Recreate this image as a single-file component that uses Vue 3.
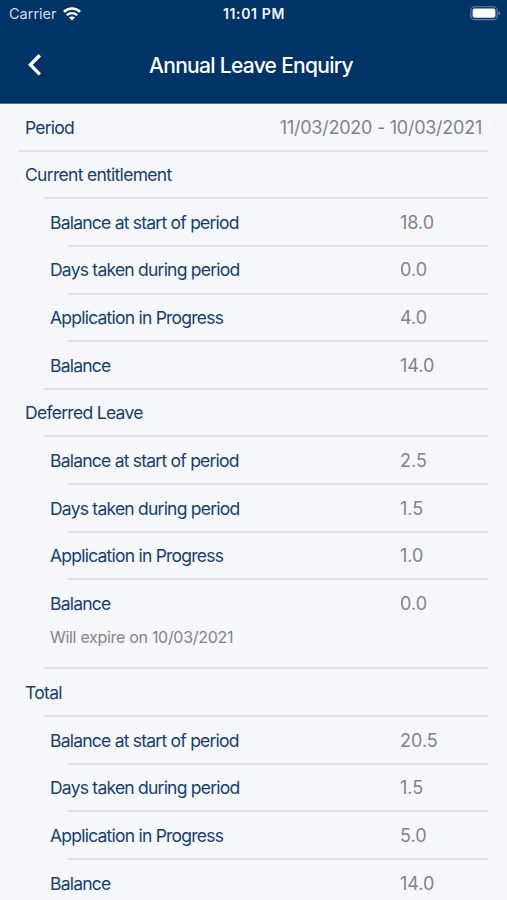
<script setup>
const sections = [
  {
    title: 'Current entitlement',
    rows: [
      { label: 'Balance at start of period', value: '18.0' },
      { label: 'Days taken during period', value: '0.0' },
      { label: 'Application in Progress', value: '4.0' },
      { label: 'Balance', value: '14.0' },
    ],
  },
  {
    title: 'Deferred Leave',
    rows: [
      { label: 'Balance at start of period', value: '2.5' },
      { label: 'Days taken during period', value: '1.5' },
      { label: 'Application in Progress', value: '1.0' },
      { label: 'Balance', value: '0.0', note: 'Will expire on 10/03/2021' },
    ],
  },
  {
    title: 'Total',
    rows: [
      { label: 'Balance at start of period', value: '20.5' },
      { label: 'Days taken during period', value: '1.5' },
      { label: 'Application in Progress', value: '5.0' },
      { label: 'Balance', value: '14.0' },
    ],
  },
]
</script>

<template>
  <div class="screen">
    <header class="header">
      <div class="status">
        <div class="carrier">
          <span class="carrier-name">Carrier</span>
          <svg class="wifi" viewBox="0 0 18 14" width="18" height="14">
            <path d="M.9 4.9C5.5.5 12.5.5 17.1 4.9" fill="none" stroke="#fff" stroke-width="2.5" />
            <path d="M3.8 8.1C6.7 5.4 11.3 5.4 14.2 8.1" fill="none" stroke="#fff" stroke-width="2.3" />
            <path d="M9 13.6L5.9 10.6C7.6 9 10.4 9 12.1 10.6Z" fill="#fff" />
          </svg>
        </div>
        <span class="time">11:01 PM</span>
        <svg class="battery" viewBox="0 0 31 15" width="31" height="15">
          <rect x=".8" y=".8" width="26.4" height="12.8" rx="3.8" fill="none" stroke="#6583a3" stroke-width="1.1" />
          <rect x="2.6" y="2.6" width="22.8" height="9.2" rx="2" fill="#fff" />
          <path d="M28.5 5.2Q30.2 5.8 30.2 7.2T28.5 9.2Z" fill="#6583a3" />
        </svg>
      </div>
      <div class="nav">
        <svg class="back" viewBox="0 0 14 24" width="14" height="24">
          <path d="M11.8 2.2L2.4 11.8L11.8 21.4" fill="none" stroke="#fff" stroke-width="3.4" />
        </svg>
        <h1 class="title">Annual Leave Enquiry</h1>
      </div>
    </header>

    <main class="content">
      <div class="period">
        <span>Period</span>
        <span class="dates">11/03/2020 - 10/03/2021</span>
      </div>
      <section v-for="section in sections" :key="section.title" class="section">
        <h2 class="heading">{{ section.title }}</h2>
        <div class="items">
          <div v-for="row in section.rows" :key="row.label" class="item">
            <div class="row">
              <span>{{ row.label }}</span>
              <span class="value">{{ row.value }}</span>
            </div>
            <p v-if="row.note" class="note">{{ row.note }}</p>
            <div class="divider"></div>
          </div>
        </div>
      </section>
    </main>
  </div>
</template>

<style>
body {
  margin: 0;
  background: #f5f7fa;
}
</style>

<style scoped>
.screen {
  height: 900px;
  overflow: hidden;
  background: #f5f7fa;
  color: #163e70;
  font-family: Inter, "Liberation Sans", sans-serif;
  font-size: 17.5px;
  letter-spacing: -0.77px;
}
.header {
  box-sizing: border-box;
  height: 104px;
  background: #003366;
  color: #fff;
  border-bottom: 1px solid #4a6f94;
}
.status {
  height: 27px;
  display: grid;
  grid-template-columns: 1fr auto 1fr;
  align-items: center;
  padding: 0 6px 0 9px;
}
.carrier {
  display: flex;
  align-items: center;
  gap: 6px;
}
.carrier-name {
  font-size: 14.5px;
  letter-spacing: 0;
  color: #d3dce6;
}
.time {
  margin-right: 2px;
  font-size: 14px;
  font-weight: 600;
  letter-spacing: 0.65px;
  color: #f2f5f8;
}
.battery {
  justify-self: end;
}
.nav {
  height: 76px;
  display: grid;
  grid-template-columns: 42px 1fr 47px;
  align-items: center;
}
.back {
  justify-self: end;
}
.title {
  margin: 0;
  text-align: center;
  font-size: 21px;
  font-weight: 500;
  letter-spacing: -0.7px;
}
.content {
  padding: 0 19px;
}
.period,
.heading,
.row {
  box-sizing: border-box;
  display: flex;
  align-items: center;
}
.period {
  height: 47.6px;
  justify-content: space-between;
  padding: 1px 6px 0;
  border-bottom: 2px solid #e0e2e5;
}
.dates {
  color: #838488;
  font-size: 18px;
  letter-spacing: -0.25px;
}
.heading {
  margin: 0 0 0 25px;
  height: 47.65px;
  padding-top: 0.5px;
  text-indent: -19px;
  font-size: 17.5px;
  font-weight: 400;
  letter-spacing: -0.7px;
  border-bottom: 2px solid #e0e2e5;
}
.items {
  margin-left: 25px;
}
.row {
  height: 45.65px;
  display: grid;
  grid-template-columns: 350px 1fr;
  padding: 0.5px 0 0 6px;
}
.value {
  color: #838488;
  font-size: 18px;
  letter-spacing: 0;
}
.divider {
  height: 2px;
  margin-left: 24px;
  background: #e0e2e5;
}
.item:last-child .divider {
  margin-left: 0;
}
.note {
  margin: 0 0 0 6px;
  height: 41.4px;
  line-height: 22px;
  font-size: 16px;
  letter-spacing: -0.3px;
  color: #838488;
}
</style>
